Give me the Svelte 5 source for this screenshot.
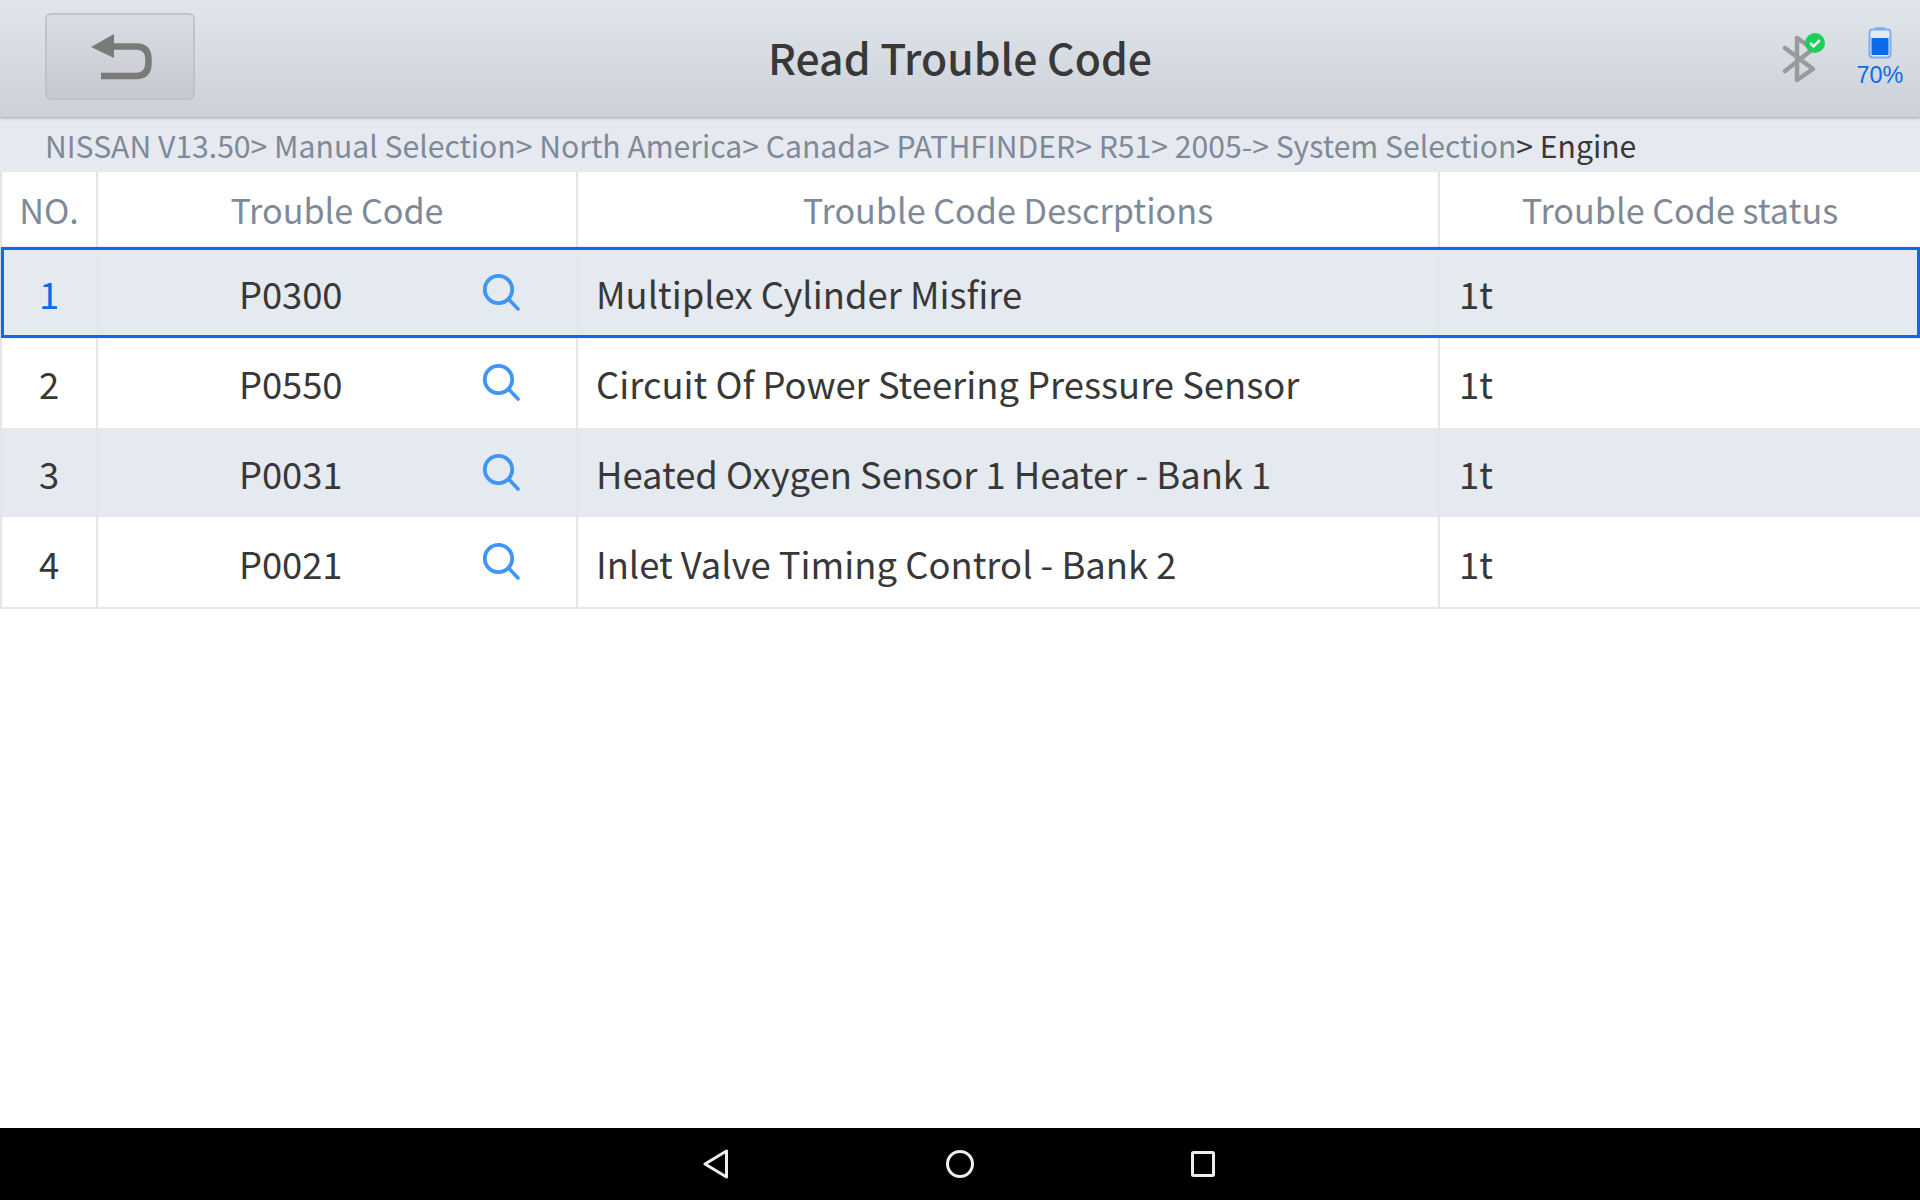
<script>
  const rows = [
    { no: 1, code: 'P0300', desc: 'Multiplex Cylinder Misfire', status: '1t' },
    { no: 2, code: 'P0550', desc: 'Circuit Of Power Steering Pressure Sensor', status: '1t' },
    { no: 3, code: 'P0031', desc: 'Heated Oxygen Sensor 1 Heater - Bank 1', status: '1t' },
    { no: 4, code: 'P0021', desc: 'Inlet Valve Timing Control - Bank 2', status: '1t' }
  ];
</script>

<div class="page">
  <header class="top">
    <button class="back" aria-label="Back">
      <svg width="64" height="48" viewBox="0 0 64 48">
        <path d="M1 14 L24 1 V25 Z" fill="#7a7a7a" />
        <path d="M22 13.5 H46 Q58.5 13.5 58.5 26 V30 Q58.5 43 46 43 H11" fill="none" stroke="#7a7a7a" stroke-width="6.5" />
      </svg>
    </button>
    <h1>Read Trouble Code</h1>
    <div class="status">
      <div class="bt">
        <svg width="42" height="52" viewBox="0 0 42 52">
          <path d="M6 16 L34 37 L18 48 V6 L34 17 L6 39" fill="none" stroke="#9a9a9a" stroke-width="4.5" stroke-linejoin="round" stroke-linecap="round" />
        </svg>
        <svg class="ok" width="20" height="20" viewBox="0 0 21 21">
          <circle cx="10.5" cy="10.5" r="10.5" fill="#1fcf5b" />
          <path d="M5.5 10.5 L9 14 L15.5 7.5" fill="none" stroke="#fff" stroke-width="2.6" />
        </svg>
      </div>
      <div class="batt">
        <svg width="24" height="32" viewBox="0 0 24 32">
          <rect x="7" y="0" width="10" height="3" rx="1" fill="#8db6ef" />
          <rect x="1.5" y="2.5" width="21" height="28" rx="3" fill="#e6e9ef" stroke="#7cadf0" stroke-width="2" />
          <rect x="3.5" y="11" width="17" height="17" fill="#0a6cea" />
        </svg>
        <span>70%</span>
      </div>
    </div>
  </header>

  <div class="crumb">NISSAN V13.50&gt; Manual Selection&gt; North America&gt; Canada&gt; PATHFINDER&gt; R51&gt; 2005-&gt; System Selection<b>&gt; Engine</b></div>

  <main class="table">
    <div class="row head">
      <div class="cell c-no">NO.</div>
      <div class="cell c-code">Trouble Code</div>
      <div class="cell c-desc">Trouble Code Descrptions</div>
      <div class="cell c-stat">Trouble Code status</div>
    </div>
    {#each rows as r, i}
      <div class="row" class:alt={i % 2 === 0} class:sel={i === 0}>
        <div class="cell c-no num">{r.no}</div>
        <div class="cell c-code code">
          <span class="codetext">{r.code}</span>
          <svg class="mag" width="40" height="40" viewBox="0 0 40 40">
            <circle cx="16.5" cy="16.5" r="13.7" fill="none" stroke="#3f96f7" stroke-width="3.8" />
            <path d="M27 26.5 L36 36" stroke="#3f96f7" stroke-width="3.6" stroke-linecap="round" />
          </svg>
        </div>
        <div class="cell c-desc left">{r.desc}</div>
        <div class="cell c-stat left">{r.status}</div>
      </div>
    {/each}
  </main>

  <footer class="nav">
    <svg width="26" height="30" viewBox="0 0 26 30"><path d="M23.5 2 V28 L2 15 Z" fill="none" stroke="#eee" stroke-width="3" stroke-linejoin="round" /></svg>
    <svg width="28" height="30" viewBox="0 0 28 30"><circle cx="14" cy="15" r="12.5" fill="none" stroke="#eee" stroke-width="3" /></svg>
    <svg width="24" height="26" viewBox="0 0 24 26"><rect x="1.5" y="1.5" width="21" height="23" rx="1" fill="none" stroke="#eee" stroke-width="3" /></svg>
  </footer>
</div>

<style>
  :global(body) { margin: 0; }
  .page {
    width: 1920px; height: 1200px; display: flex; flex-direction: column; background: #fff;
    font-family: "Noto Sans CJK SC", "Noto Sans", sans-serif; overflow: hidden;
  }
  .top {
    height: 117px; flex: none; position: relative; z-index: 1; display: flex; align-items: center;
    justify-content: center; background: linear-gradient(#e1e5ec, #ccd0d8);
    box-shadow: 0 1px 3px rgba(0,0,0,.3);
  }
  .back {
    position: absolute; left: 45px; top: 13px; width: 150px; height: 87px; box-sizing: border-box; padding: 0 0 0 4px;
    border: 2px solid #bfc2c7; border-radius: 6px; background: linear-gradient(#dadde3, #c6c9ce);
    display: flex; align-items: center; justify-content: center;
  }
  h1 { margin: 0; font-size: 42.7px; font-weight: 500; color: #383838; line-height: 1; position: relative; top: -2px; }
  .status { position: absolute; right: 0; top: 0; height: 117px; }
  .bt { position: absolute; right: 99px; top: 32px; width: 42px; height: 52px; }
  .ok { position: absolute; left: 26px; top: 1px; }
  .batt { position: absolute; right: 16px; top: 27px; width: 48px; display: flex; flex-direction: column; align-items: center; }
  .batt span { font: 23.4px/1 "Liberation Sans", sans-serif; color: #0a6cea; margin-top: 5px; }
  .crumb {
    height: 55px; flex: none; box-sizing: border-box; padding-left: 45px; background: #e6e9ef; color: #7e8a99;
    font-size: 30.15px; line-height: 56px; white-space: nowrap;
  }
  .crumb b { font-weight: 400; color: #383838; }
  .table { border-bottom: 2px solid #e6e6e6; flex: none; }
  .row { display: flex; height: 89.75px; position: relative; box-sizing: border-box; color: #383838; font-size: 36.4px; }
  .row.head { height: 76px; color: #7e8a99; font-size: 34.2px; border-left: 2px solid #e6e6e6; }
  .row:not(.head) { border-left: 2px solid #e6e6e6; }
  .row.alt { background: #e5e9f0; }
  .row.sel::after {
    content: ""; position: absolute; inset: -1px 0 0 -1px; border: 3px solid #0a6cea; pointer-events: none;
    box-shadow: 0 0 1px #7cadf0;
  }
  .cell { box-sizing: border-box; display: flex; align-items: center; justify-content: center; border-right: 2px solid #e6e6e6; height: 100%; white-space: nowrap; }
  .row:not(.head) .cell { padding-top: 1px; }
  .row.head .cell { padding-bottom: 2px; }
  .c-no { width: 96px; }
  .c-code { width: 480px; }
  .c-desc { width: 862px; }
  .c-stat { flex: 1; border-right: none; }
  .left { justify-content: flex-start; padding-left: 19px; }
  .c-desc.left { padding-left: 18px; }
  .sel .num { color: #0a6cea; }
  .code { position: relative; }
  .codetext { position: absolute; left: 141px; letter-spacing: -.1px; }
  .mag { position: absolute; left: 384px; top: 25px; }
  .nav {
    margin-top: auto; height: 72px; flex: none; background: #000;
    display: flex; justify-content: space-between; align-items: center;
    padding: 0 705px 0 703px; box-sizing: border-box;
  }
</style>
